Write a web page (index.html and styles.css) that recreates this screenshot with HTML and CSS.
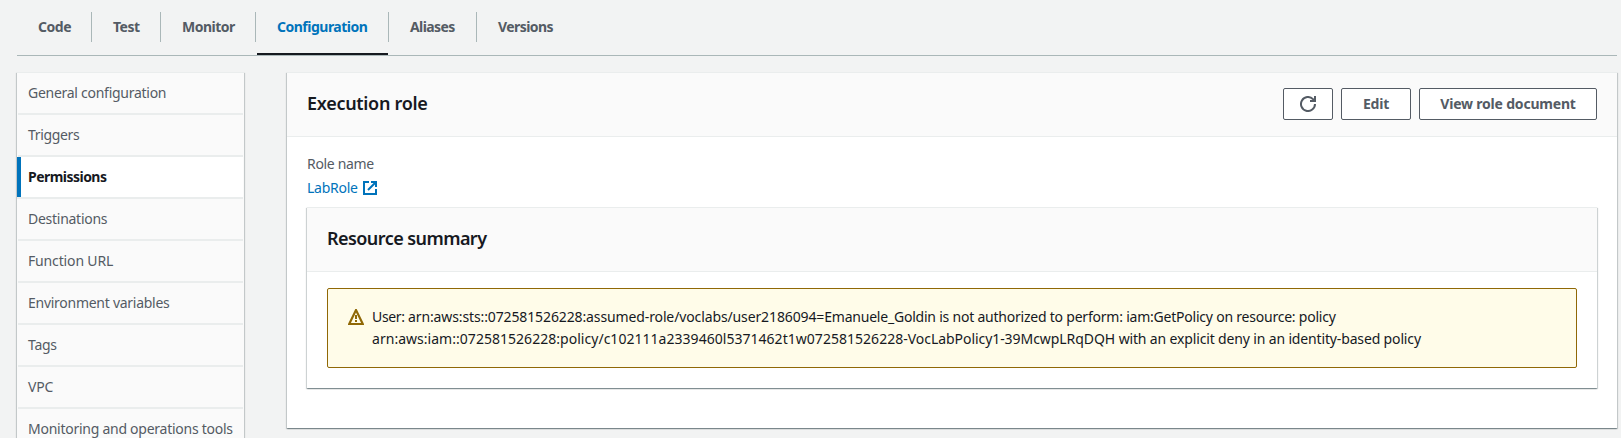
FILE: index.html
```html
<!DOCTYPE html>
<html lang="en">
<head>
<meta charset="utf-8">
<title>Execution role</title>
<link rel="stylesheet" href="styles.css">
</head>
<body>
<nav class="tabs">
  <a class="tab tab-code"><span class="t-code">Code</span></a>
  <a class="tab tab-test"><span class="t-test">Test</span></a>
  <a class="tab tab-monitor"><span class="t-monitor">Monitor</span></a>
  <a class="tab tab-config active"><span class="t-config">Configuration</span></a>
  <a class="tab tab-aliases"><span class="t-aliases">Aliases</span></a>
  <a class="tab tab-versions"><span class="t-versions">Versions</span></a>
</nav>
<div class="layout">
  <aside class="side">
    <a class="item"><span class="s-general">General configuration</span></a>
    <a class="item"><span class="s-triggers">Triggers</span></a>
    <a class="item selected"><span class="s-permissions">Permissions</span></a>
    <a class="item"><span class="s-destinations">Destinations</span></a>
    <a class="item"><span class="s-function">Function URL</span></a>
    <a class="item"><span class="s-environment">Environment variables</span></a>
    <a class="item"><span class="s-tags">Tags</span></a>
    <a class="item"><span class="s-vpc">VPC</span></a>
    <a class="item"><span class="s-monitoring">Monitoring and operations tools</span></a>
  </aside>
  <main class="panel role">
    <header class="head">
      <h2 class="title t-role">Execution role</h2>
      <div class="actions">
        <button class="btn btn-refresh" aria-label="Refresh">
          <svg width="16" height="16" viewBox="0 0 16 16" fill="none" stroke="currentColor" stroke-width="2"><path d="M15 8a7 7 0 1 1-2-4.9L14.6 5"/><path d="M10 5h5V0"/></svg>
        </button>
        <button class="btn btn-edit"><span class="b-edit">Edit</span></button>
        <button class="btn btn-view"><span class="b-view">View role document</span></button>
      </div>
    </header>
    <div class="body">
      <div class="label"><span class="l-name">Role name</span></div>
      <a class="link"><span class="l-role">LabRole</span>
        <svg width="14" height="14" viewBox="0 0 14 14" fill="none" stroke="currentColor" stroke-width="2"><path d="M6 1H1v12h12V8"/><path d="M8 1h5v5M13 1L5 9"/></svg>
      </a>
      <section class="panel summary">
        <header class="head"><h2 class="title t-summary">Resource summary</h2></header>
        <div class="alert">
          <svg class="warn" width="16" height="16" viewBox="0 0 16 16" fill="currentColor"><path fill-rule="evenodd" d="M7.3 0h1.4L16 15v1H0v-1zM8 3.6L2.9 14h10.2z"/><path d="M7 6h2v4H7zM7 11h2v2H7z"/></svg>
          <div class="message">
            <div><span class="m-user">User: </span><span class="m-arn">arn:aws:sts::072581526228:assumed-role/voclabs/user2186094=</span><span class="m-text">Emanuele_Goldin is not authorized to perform: iam:GetPolicy on resource: policy</span></div>
            <div><span class="m-policy">arn:aws:iam::072581526228:policy/c102111a2339460l5371462t1w072581526228-</span><span class="m-id">VocLabPolicy1-39McwpLRqDQH</span><span class="m-rest"> with an explicit deny in an identity-based policy</span></div>
          </div>
        </div>
      </section>
    </div>
  </main>
</div>
</body>
</html>
```
FILE: styles.css
```css
* { box-sizing: border-box; }
body {
  margin: 0;
  height: 438px;
  overflow: hidden;
  background: #f2f3f3;
  color: #16191f;
  font: 14px/22px "Noto Sans", "Open Sans", sans-serif;
  white-space: nowrap;
}
.tabs {
  display: flex;
  margin: 0 4px 0 17px;
  height: 56px;
  padding-top: 12px;
  border-bottom: 1px solid #aab7b8;
  color: #545b64;
  font-weight: 700;
}
.tab {
  height: 30px;
  padding: 4px 0 0 21px;
  border-right: 1px solid #aab7b8;
}
.tab-code { width: 75px; }
.tab-test { width: 69px; }
.tab-monitor { width: 95px; }
.tab-config { width: 133px; }
.tab-aliases { width: 88px; }
.tab-versions { border-right: 0; }
.active { color: #0073bb; }
.active::after {
  content: "";
  display: block;
  width: 131px;
  height: 2px;
  margin: 15px 0 0 -20px;
  background: #16191f;
}
.layout {
  display: flex;
  gap: 43px;
  align-items: flex-start;
  padding: 16px 4px 0 17px;
}
.side, .panel {
  border-top: 1px solid #eaeded;
  box-shadow: 0 1px 1px 0 rgba(0,28,36,.3), 1px 1px 1px 0 rgba(0,28,36,.15), -1px 1px 1px 0 rgba(0,28,36,.15);
}
.side {
  flex: none;
  width: 227px;
  height: 380px;
  padding: 0 1px;
  background: #fafafa;
  color: #545b64;
}
.item {
  display: block;
  height: 42px;
  padding: 9px 0 0 10px;
  border-bottom: 2px solid #eaeded;
}
.selected {
  margin-left: -1px;
  padding-left: 11px;
  background: #fff;
  box-shadow: inset 4px 0 #0073bb;
  color: #16191f;
  font-weight: 700;
}
.panel { background: #fff; }
.role { flex: 1; height: 356px; }
.head {
  display: flex;
  justify-content: space-between;
  height: 64px;
  padding: 15px 20px 0;
  border-bottom: 1px solid #eaeded;
  background: #fafafa;
}
.title {
  margin: 4px 0 0;
  font-size: 18px;
  line-height: 22px;
  font-weight: 600;
}
.actions { display: flex; gap: 8px; }
.btn {
  display: flex;
  align-items: center;
  justify-content: center;
  height: 32px;
  padding: 0;
  border: 1px solid #545b64;
  border-radius: 2px;
  background: #fff;
  color: #545b64;
  font: 700 14px/22px "Noto Sans", "Open Sans", sans-serif;
}
.btn-refresh { width: 50px; }
.btn-edit { width: 70px; }
.btn-view { width: 178px; }
.body { padding: 16px 20px 0; }
.label { height: 24px; color: #545b64; }
.link { display: flex; align-items: center; gap: 5px; height: 22px; color: #0073bb; }
.summary { height: 181px; margin-top: 8px; }
.alert {
  display: flex;
  gap: 8px;
  height: 80px;
  margin: 16px 20px 0;
  padding: 17px 20px 0;
  border: 1px solid #906806;
  border-radius: 2px;
  background: #fffce9;
}
.warn { margin-top: 3px; color: #906806; }

/* Tracking */
.t-code { letter-spacing: -.45px; }
.t-test, .t-monitor { letter-spacing: -.5px; }
.t-config { letter-spacing: -.5px; }
.t-aliases, .t-versions { letter-spacing: -.58px; }
.s-general, .s-destinations, .s-environment, .s-tags { letter-spacing: -.27px; }
.s-monitoring { letter-spacing: -.26px; }
.s-triggers { letter-spacing: -.35px; }
.s-permissions { letter-spacing: -.53px; }
.s-function, .s-vpc { letter-spacing: -.15px; }
.t-role { letter-spacing: -.3px; }
.t-summary { letter-spacing: -.56px; }
.b-edit, .b-view { letter-spacing: -.2px; }
.l-name { letter-spacing: -.32px; }
.l-role { letter-spacing: -.25px; }
.m-user { letter-spacing: -.33px; }
.m-arn { letter-spacing: -.12px; }
.m-text { letter-spacing: -.22px; }
.m-policy { letter-spacing: .03px; }
.m-id { letter-spacing: -.06px; }
.m-rest { letter-spacing: -.15px; }
```
